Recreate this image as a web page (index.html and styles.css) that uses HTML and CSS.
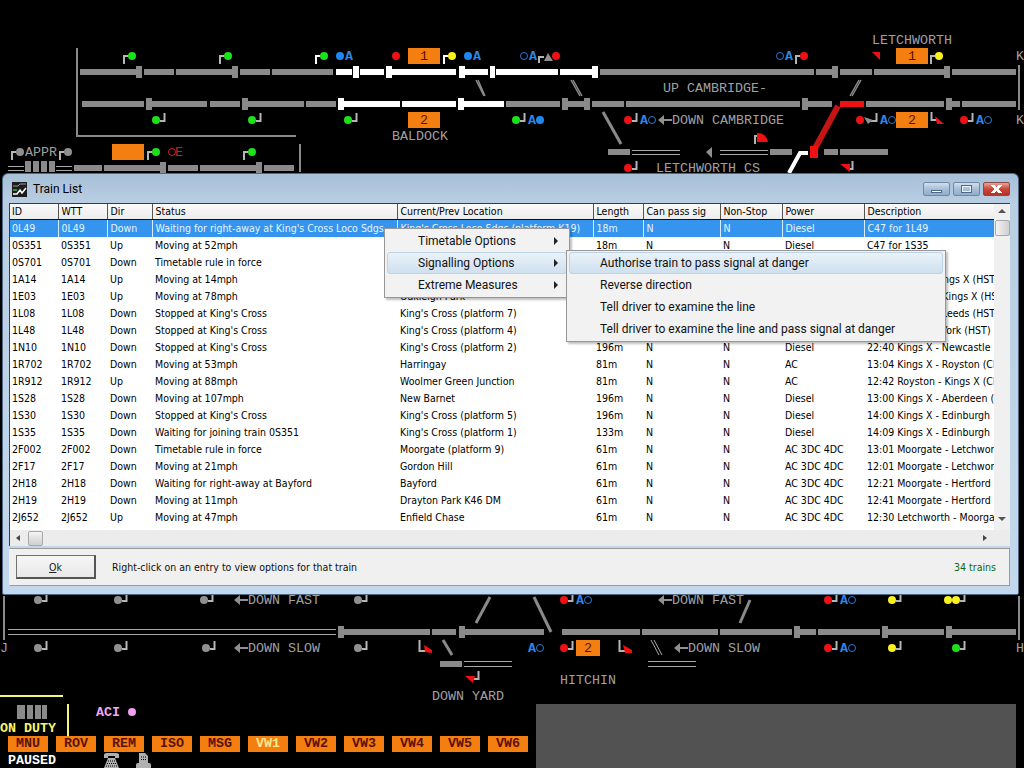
FILE: index.html
```html
<!DOCTYPE html>
<html lang="en">
<head>
<meta charset="utf-8">
<title>Train List</title>
<link rel="stylesheet" href="styles.css">
</head>
<body>
<div class="desk">
<svg class="panel" width="1024" height="768" viewBox="0 0 1024 768" xmlns="http://www.w3.org/2000/svg">
  <defs>
    <path id="up" class="post" d="M-8 8V0H-4"/>
    <path id="upw" class="postw" d="M-8 8V0H-4"/>
    <path id="dn" class="post" d="M4 1H8.5V-7"/>
  </defs>
  <!-- track lines -->
  <g class="trk">
    <path d="M80 72H137M144 72H174M176 72H233M240 72H270M272 72H333"/>
    <path d="M600 72H814M816 72H833M840 72H872M874 72H946M952 72H1016"/>
    <path d="M82 104H144M152 104H207M210 104H240M247 104H304M306 104H336M506 104H560M568 104H585M592 104H624M626 104H800M808 104H832M866 104H944M950 104H960M962 104H1016"/>
    <path d="M608 152H630M770 152H792M824 152H838M840 152H888"/>
    <path d="M74 168H102M104 168H162M168 168H198M200 168H257M264 168H294"/>
    <path d="M344 632H430M432 632H456M464 632H544M562 632H640M642 632H718M720 632H792M800 632H816M818 632H880M886 632H944M950 632H1016"/>
    <path d="M440 664H462"/>
  </g>
  <g class="trkw">
    <path d="M336 72H352M360 72H384M392 72H456M464 72H488M496 72H558M560 72H592"/>
    <path d="M344 104H400M402 104H456M464 104H504"/>
    <path d="M789 173L800 153H808" class="thin"/>
  </g>
  <!-- joint blocks -->
  <g class="blk">
    <rect x="136" y="66" width="6" height="12"/><rect x="232" y="66" width="6" height="12"/>
    <rect x="832" y="66" width="6" height="12"/><rect x="944" y="66" width="6" height="12"/>
    <rect x="146" y="98" width="6" height="12"/><rect x="242" y="98" width="6" height="12"/>
    <rect x="562" y="98" width="6" height="12"/><rect x="584" y="98" width="6" height="12"/>
    <rect x="802" y="98" width="6" height="12"/><rect x="946" y="98" width="6" height="12"/>
    <rect x="160" y="162" width="6" height="12"/><rect x="256" y="162" width="6" height="12"/>
    <rect x="25" y="161" width="6" height="11"/><rect x="33" y="161" width="6" height="11"/>
    <rect x="41" y="161" width="6" height="11"/><rect x="49" y="161" width="6" height="11"/>
    <rect x="338" y="626" width="6" height="12"/><rect x="459" y="626" width="6" height="12"/>
    <rect x="794" y="626" width="6" height="12"/><rect x="882" y="626" width="6" height="12"/>
    <rect x="946" y="626" width="6" height="12"/>
    <rect x="17" y="705" width="8" height="14"/><rect x="27" y="705" width="6" height="14"/>
    <rect x="35" y="705" width="6" height="14"/><rect x="42" y="705" width="5" height="14"/>
  </g>
  <g class="blkw">
    <rect x="353" y="66" width="6" height="12"/><rect x="386" y="66" width="6" height="12"/>
    <rect x="459" y="66" width="6" height="12"/><rect x="490" y="66" width="5" height="12"/>
    <rect x="592" y="66" width="6" height="12"/>
    <rect x="338" y="98" width="6" height="12"/><rect x="458" y="98" width="6" height="12"/>
  </g>
  <!-- frame lines -->
  <g class="frame">
    <path d="M77 48V136H296"/>
    <path d="M300 144V172"/>
    <path d="M1019 65V110"/>
    <path d="M4 596V640"/>
    <path d="M1019 596V640"/>
  </g>
  <!-- thin double lines -->
  <g class="dbl">
    <path d="M632 150.500H680M632 154.500H680M720 150.500H768M720 154.500H768"/>
    <path d="M8 166.500H24M8 170.500H24M56 166.500H72M56 170.500H72"/>
    <path d="M8 629.500H336M8 634.500H336"/>
    <path d="M464 661.500H512M464 666.500H512M648 661.500H696M648 666.500H696"/>
    <path d="M651 640L659 655M654 640L662 655"/>
  </g>
  <!-- crossover slivers and diagonals -->
  <g class="sliver">
    <path d="M476 80L484 96M478 80L485 96"/>
    <path d="M571 80L580 96M573 80L582 96"/>
    <path d="M861 80L852 96M859 80L850 96"/>
  </g>
  <g class="diag">
    <path d="M603 112L621 144"/>
    <path d="M490 597L476 623"/>
    <path d="M534 597L551 632"/>
    <path d="M750 600L740 623"/>
    <path d="M443 640L452 655"/>
  </g>
  <path class="diagred" d="M838 106L813 152"/>
  <path class="trkred" d="M840 104H864"/>
  <rect class="red" x="810" y="146" width="8" height="12"/>
  <!-- platforms -->
  <g class="orange">
    <rect x="408" y="48" width="32" height="16"/><rect x="408" y="112" width="32" height="16"/>
    <rect x="896" y="48" width="32" height="16"/><rect x="896" y="112" width="32" height="16"/>
    <rect x="112" y="144" width="32" height="16"/><rect x="576" y="640" width="24" height="16"/>
  </g>
  <rect class="shade" x="536" y="704" width="480" height="64"/>
  <path class="yline" d="M0 696H63M68 704V736"/>
  <!-- up signal posts -->
  <use href="#up" x="132" y="56"/><use href="#up" x="228" y="56"/><use href="#upw" x="324" y="56"/>
  <use href="#upw" x="452" y="56"/><use href="#up" x="804" y="56"/>
  <use href="#up" x="939" y="56"/><use href="#up" x="20" y="152"/><use href="#up" x="68" y="152"/>
  <use href="#up" x="156" y="152"/><use href="#up" x="252" y="152"/><use href="#up" x="763" y="136"/>
  <!-- down signal posts -->
  <use href="#dn" x="156" y="120"/><use href="#dn" x="252" y="120"/><use href="#dn" x="348" y="120"/>
  <use href="#dn" x="516" y="120"/><use href="#dn" x="628" y="120"/>
  <use href="#dn" x="964" y="120"/><use href="#dn" x="628" y="168"/>
  <use href="#dn" x="844" y="168"/><use href="#dn" x="38" y="600"/><use href="#dn" x="118" y="600"/>
  <use href="#dn" x="204" y="600"/><use href="#dn" x="358" y="600"/><use href="#dn" x="564" y="600"/>
  <use href="#dn" x="828" y="600"/><use href="#dn" x="892" y="600"/><use href="#dn" x="956" y="600"/>
  <use href="#dn" x="38" y="648"/><use href="#dn" x="118" y="648"/><use href="#dn" x="206" y="648"/>
  <use href="#dn" x="358" y="648"/><use href="#dn" x="564" y="648"/><use href="#dn" x="828" y="648"/>
  <use href="#dn" x="892" y="648"/><use href="#dn" x="956" y="648"/><use href="#dn" x="470" y="678"/>
  <path class="post" d="M539 63V57H544M870 121H876.500V113"/>
  <path class="post" d="M931.500 112V120H937M419.500 640V651H426M619.500 640V651H626"/>
  <!-- aspects -->
  <g class="green">
    <circle cx="132" cy="56" r="4"/><circle cx="228" cy="56" r="4"/><circle cx="324" cy="56" r="4"/>
    <circle cx="156" cy="120" r="4"/><circle cx="252" cy="120" r="4"/><circle cx="348" cy="120" r="4"/>
    <circle cx="516" cy="120" r="4"/><circle cx="156" cy="152" r="4"/><circle cx="252" cy="152" r="4"/>
    <circle cx="956" cy="648" r="4"/>
  </g>
  <g class="red">
    <circle cx="396" cy="56" r="4"/><circle cx="556" cy="56" r="4"/><circle cx="804" cy="56" r="4"/>
    <circle cx="628" cy="120" r="4"/><circle cx="860" cy="120" r="4"/><circle cx="964" cy="120" r="4"/>
    <circle cx="628" cy="168" r="4"/><circle cx="564" cy="600" r="4"/><circle cx="828" cy="600" r="4"/>
    <circle cx="564" cy="648" r="4"/><circle cx="828" cy="648" r="4"/>
    <path d="M872 52H880V60Z"/><path d="M757 133V142H768A10 10 0 0 0 757 133Z"/>
    <path d="M840 164H850V172Z"/><path d="M935 116L944 124H937Z"/>
    <path d="M424 645L432 650V653L425 652Z"/><path d="M623 645L632 650V653H625Z"/>
    <path d="M465 676H475L473 683Z"/>
  </g>
  <g class="yellow">
    <circle cx="452" cy="56" r="4"/><circle cx="939" cy="56" r="4"/><circle cx="892" cy="600" r="4"/>
    <circle cx="948" cy="600" r="4"/><circle cx="956" cy="600" r="4"/><circle cx="892" cy="648" r="4"/>
  </g>
  <g class="gsig">
    <circle cx="20" cy="152" r="4"/><circle cx="68" cy="152" r="4"/><circle cx="38" cy="600" r="4"/>
    <circle cx="118" cy="600" r="4"/><circle cx="204" cy="600" r="4"/><circle cx="358" cy="600" r="4"/>
    <circle cx="38" cy="648" r="4"/><circle cx="118" cy="648" r="4"/><circle cx="206" cy="648" r="4"/>
    <circle cx="358" cy="648" r="4"/>
    <path d="M544 61L548 53L553 61Z"/><path d="M864 117L873 120L868 124Z"/>
    <path d="M706 152L712 147V158Z"/>
  </g>
  <g class="blue">
    <circle cx="340" cy="56" r="4"/><circle cx="468" cy="56" r="4"/><circle cx="540" cy="120" r="4"/>
  </g>
  <g class="ring">
    <circle cx="524" cy="56" r="3.500"/><circle cx="780" cy="56" r="3.500"/><circle cx="652" cy="120" r="3.500"/>
    <circle cx="892" cy="120" r="3.500"/><circle cx="988" cy="120" r="3.500"/><circle cx="588" cy="600" r="3.500"/>
    <circle cx="852" cy="600" r="3.500"/><circle cx="540" cy="648" r="3.500"/><circle cx="852" cy="648" r="3.500"/>
  </g>
  <circle class="redring" cx="172" cy="152" r="3.500"/>
  <circle class="pink" cx="132" cy="712" r="4"/>
  <!-- arrows -->
  <g class="arrows">
    <path d="M658 120L664 115V119H672V121H664V125Z"/>
    <path d="M234 600L240 595V599H248V601H240V605Z"/>
    <path d="M658 600L664 595V599H672V601H664V605Z"/>
    <path d="M234 648L240 643V647H248V649H240V653Z"/>
    <path d="M674 648L680 643V647H688V649H680V653Z"/>
  </g>
  <!-- labels -->
  <g transform="translate(0 -1)">
    <g class="lab">
      <text x="872" y="45">LETCHWORTH</text><text x="663" y="93">UP CAMBRIDGE-</text>
      <text x="672" y="125">DOWN CAMBRIDGE</text><text x="392" y="141">BALDOCK</text>
      <text x="656" y="173">LETCHWORTH CS</text><text x="25" y="157">APPR</text>
      <text x="1016" y="61">K</text><text x="1016" y="125">K</text>
      <text x="248" y="605">DOWN FAST</text><text x="672" y="605">DOWN FAST</text>
      <text x="248" y="653">DOWN SLOW</text><text x="688" y="653">DOWN SLOW</text>
      <text x="0" y="653">J</text><text x="1016" y="653">H</text>
      <text x="432" y="701">DOWN YARD</text><text x="560" y="685">HITCHIN</text>
    </g>
    <g class="labblue">
      <text x="345" y="61">A</text><text x="473" y="61">A</text><text x="529" y="61">A</text><text x="785" y="61">A</text>
      <text x="528" y="125">A</text><text x="640" y="125">A</text><text x="880" y="125">A</text><text x="976" y="125">A</text>
      <text x="576" y="605">A</text><text x="840" y="605">A</text><text x="528" y="653">A</text><text x="840" y="653">A</text>
    </g>
    <g class="labdark">
      <text x="420" y="61">1</text><text x="420" y="125">2</text><text x="908" y="61">1</text><text x="908" y="125">2</text>
      <text x="584" y="653">2</text>
    </g>
    <text class="labred" x="175" y="157">E</text>
    <text class="labyellow" x="0" y="733">ON DUTY</text>
    <text class="labpink" x="96" y="717">ACI</text>
    <text class="labwhite" x="8" y="765">PAUSED</text>
  </g>
  <!-- telephone -->
  <g class="icon">
    <path d="M104 755Q104 753 107 753H116Q119 753 119 755V758H115V756H108V758H104Z"/>
    <path d="M108 758H115L119 768H104Z"/>
  </g>
  <path class="icondots" d="M108 761H115M107 763.500H116M106 766H117"/>
  <!-- printer -->
  <g class="icon">
    <path d="M139 753H145L148 756V763H139Z"/>
    <path d="M136 768V765Q136 763 138 763H149Q151 763 151 765V768Z"/>
  </g>
  <path class="icondots" d="M141 757H146M141 759.500H146"/>
</svg>

<div class="cmds">
  <span class="cmd">MNU</span><span class="cmd">ROV</span><span class="cmd">REM</span><span class="cmd">ISO</span>
  <span class="cmd">MSG</span><span class="cmd on">VW1</span><span class="cmd">VW2</span><span class="cmd">VW3</span>
  <span class="cmd">VW4</span><span class="cmd">VW5</span><span class="cmd">VW6</span>
</div>

<section class="win">
  <header class="titlebar">
    <svg class="appicon" width="15" height="15" viewBox="0 0 15 15" xmlns="http://www.w3.org/2000/svg">
      <rect width="15" height="15" fill="#1c1c1c"/>
      <path d="M1 4H6L8 2H14" stroke="#9a9a9a" fill="none"/>
      <path d="M1 12H5L8 8L10 11L14 6" stroke="#fff" stroke-width="1.500" fill="none"/>
      <path d="M1 8H5" stroke="#38b54a" stroke-width="1.500"/>
    </svg>
    <h1 class="wintitle">Train List</h1>
    <div class="caps">
      <span class="cap"><i class="glyph-min"></i></span>
      <span class="cap"><i class="glyph-max"></i></span>
      <span class="cap close"><i class="glyph-x"></i></span>
    </div>
  </header>
  <div class="listbox">
    <div class="listmain">
      <table class="grid">
        <colgroup>
          <col class="c1"><col class="c2"><col class="c3"><col class="c4"><col class="c5"><col class="c6"><col class="c7"><col class="c8"><col class="c9"><col class="c10">
        </colgroup>
        <thead>
          <tr><th>ID</th><th>WTT</th><th>Dir</th><th>Status</th><th>Current/Prev Location</th><th>Length</th><th>Can pass sig</th><th>Non-Stop</th><th>Power</th><th>Description</th></tr>
        </thead>
        <tbody>
          <tr class="sel"><td>0L49</td><td>0L49</td><td>Down</td><td>Waiting for right-away at King's Cross Loco Sdgs</td><td>King's Cross Loco Sdgs (platform K19)</td><td>18m</td><td>N</td><td>N</td><td>Diesel</td><td>C47 for 1L49</td></tr>
          <tr><td>0S351</td><td>0S351</td><td>Up</td><td>Moving at 52mph</td><td></td><td>18m</td><td>N</td><td>N</td><td>Diesel</td><td>C47 for 1S35</td></tr>
          <tr><td>0S701</td><td>0S701</td><td>Down</td><td>Timetable rule in force</td><td></td><td></td><td></td><td></td><td></td><td></td></tr>
          <tr><td>1A14</td><td>1A14</td><td>Up</td><td>Moving at 14mph</td><td></td><td></td><td></td><td></td><td></td><td>12:35 Leeds - Kings X (HST)</td></tr>
          <tr><td>1E03</td><td>1E03</td><td>Up</td><td>Moving at 78mph</td><td>Oakleigh Park</td><td></td><td></td><td></td><td></td><td>12:20 Newark - Kings X (HST)</td></tr>
          <tr><td>1L08</td><td>1L08</td><td>Down</td><td>Stopped at King's Cross</td><td>King's Cross (platform 7)</td><td></td><td></td><td></td><td></td><td>13:05 Kings X - Leeds (HST)</td></tr>
          <tr><td>1L48</td><td>1L48</td><td>Down</td><td>Stopped at King's Cross</td><td>King's Cross (platform 4)</td><td></td><td></td><td></td><td></td><td>13:30 Kings X - York (HST)</td></tr>
          <tr><td>1N10</td><td>1N10</td><td>Down</td><td>Stopped at King's Cross</td><td>King's Cross (platform 2)</td><td>196m</td><td>N</td><td>N</td><td>Diesel</td><td>22:40 Kings X - Newcastle</td></tr>
          <tr><td>1R702</td><td>1R702</td><td>Down</td><td>Moving at 53mph</td><td>Harringay</td><td>81m</td><td>N</td><td>N</td><td>AC</td><td>13:04 Kings X - Royston (Class 365)</td></tr>
          <tr><td>1R912</td><td>1R912</td><td>Up</td><td>Moving at 88mph</td><td>Woolmer Green Junction</td><td>81m</td><td>N</td><td>N</td><td>AC</td><td>12:42 Royston - Kings X (Class 365)</td></tr>
          <tr><td>1S28</td><td>1S28</td><td>Down</td><td>Moving at 107mph</td><td>New Barnet</td><td>196m</td><td>N</td><td>N</td><td>Diesel</td><td>13:00 Kings X - Aberdeen (HST)</td></tr>
          <tr><td>1S30</td><td>1S30</td><td>Down</td><td>Stopped at King's Cross</td><td>King's Cross (platform 5)</td><td>196m</td><td>N</td><td>N</td><td>Diesel</td><td>14:00 Kings X - Edinburgh</td></tr>
          <tr><td>1S35</td><td>1S35</td><td>Down</td><td>Waiting for joining train 0S351</td><td>King's Cross (platform 1)</td><td>133m</td><td>N</td><td>N</td><td>Diesel</td><td>14:09 Kings X - Edinburgh</td></tr>
          <tr><td>2F002</td><td>2F002</td><td>Down</td><td>Timetable rule in force</td><td>Moorgate (platform 9)</td><td>61m</td><td>N</td><td>N</td><td>AC 3DC 4DC</td><td>13:01 Moorgate - Letchworth</td></tr>
          <tr><td>2F17</td><td>2F17</td><td>Down</td><td>Moving at 21mph</td><td>Gordon Hill</td><td>61m</td><td>N</td><td>N</td><td>AC 3DC 4DC</td><td>12:01 Moorgate - Letchworth</td></tr>
          <tr><td>2H18</td><td>2H18</td><td>Down</td><td>Waiting for right-away at Bayford</td><td>Bayford</td><td>61m</td><td>N</td><td>N</td><td>AC 3DC 4DC</td><td>12:21 Moorgate - Hertford</td></tr>
          <tr><td>2H19</td><td>2H19</td><td>Down</td><td>Moving at 11mph</td><td>Drayton Park K46 DM</td><td>61m</td><td>N</td><td>N</td><td>AC 3DC 4DC</td><td>12:41 Moorgate - Hertford</td></tr>
          <tr><td>2J652</td><td>2J652</td><td>Up</td><td>Moving at 47mph</td><td>Enfield Chase</td><td>61m</td><td>N</td><td>N</td><td>AC 3DC 4DC</td><td>12:30 Letchworth - Moorgate</td></tr>
        </tbody>
      </table>
      <div class="hscroll">
        <span class="arrow-l"></span>
        <span class="thumb-h"></span>
        <span class="arrow-r"></span>
      </div>
    </div>
    <div class="vscroll">
      <span class="arrow-u"></span>
      <span class="thumb-v"></span>
      <span class="arrow-d"></span>
      <span class="corner"></span>
    </div>
  </div>
  <footer class="bottom">
    <button class="ok"><u>O</u>k</button>
    <span class="hint">Right-click on an entry to view options for that train</span>
    <span class="count">34 trains</span>
  </footer>

  <ul class="menu m1">
    <li class="arrow">Timetable Options</li>
    <li class="arrow hot">Signalling Options</li>
    <li class="arrow">Extreme Measures</li>
  </ul>
  <ul class="menu m2">
    <li class="hot">Authorise train to pass signal at danger</li>
    <li>Reverse direction</li>
    <li>Tell driver to examine the line</li>
    <li>Tell driver to examine the line and pass signal at danger</li>
  </ul>
</section>
</div>
</body>
</html>
```

FILE: styles.css
```css
* { box-sizing: border-box; }
html, body { margin: 0; padding: 0; background: #000; }
.desk { position: relative; width: 1024px; height: 768px; overflow: hidden; background: #000; }
.panel { position: absolute; left: 0; top: 0; display: block; }

/* signalling panel */
.trk path { stroke: #8a8a8a; stroke-width: 6; fill: none; }
.trkw path { stroke: #fff; stroke-width: 6; fill: none; }
.trkw .thin { stroke-width: 4; }
.trkred { stroke: #ee1111; stroke-width: 6; fill: none; }
.diagred { stroke: #c41414; stroke-width: 6; fill: none; }
.blk rect { fill: #8a8a8a; }
.blkw rect { fill: #fff; }
.frame path { stroke: #8a8a8a; stroke-width: 2; fill: none; }
.dbl path { stroke: #a8a8a8; stroke-width: 1; fill: none; }
.diag path { stroke: #8a8a8a; stroke-width: 3; fill: none; }
.sliver path { stroke: #8a8a8a; stroke-width: 1.500; fill: none; }
.orange rect { fill: #f57e10; }
.shade { fill: #525252; }
.yline { stroke: #f5f56e; stroke-width: 2; fill: none; }
.post { stroke: #b4b4b4; stroke-width: 2; fill: none; }
.postw { stroke: #fff; stroke-width: 2; fill: none; }
.green circle { fill: #1ee01e; }
.red, .red circle, .red path { fill: #ee1111; }
.yellow circle { fill: #f8f020; }
.gsig circle, .gsig path, .gsig rect, .arrows path { fill: #909090; }
.blue circle { fill: #1e88f0; }
.ring circle { fill: none; stroke: #2a78d8; stroke-width: 1; }
.redring { fill: none; stroke: #d02020; stroke-width: 1; }
.pink { fill: #f0a0f0; }
.icon path { fill: #b0b0b0; }
.icondots { stroke: #000; stroke-width: 1; stroke-dasharray: 1 1; fill: none; }
.lab text, .labblue text, .labdark text, .labred, .labyellow, .labpink, .labwhite {
  font-family: "Liberation Mono", monospace;
  font-size: 13.33px;
}
.lab text { fill: #a0a0a0; }
.labblue text { fill: #2a88ee; font-weight: 700; }
.labdark text { fill: #5a1206; }
.labred { fill: #d02020; }
.labyellow { fill: #f5f56e; font-weight: 700; }
.labpink { fill: #f0a8f0; font-weight: 700; }
.labwhite { fill: #fff; font-weight: 700; }

/* command strip */
.cmds { position: absolute; left: 8px; top: 736px; display: flex; gap: 8px; }
.cmd {
  width: 40px; height: 16px; background: #f57e10; color: #5a1206;
  font: 700 13.33px/16px "Liberation Mono", monospace; text-align: center;
}
.cmd.on { color: #f8e890; }

/* window */
.win {
  position: absolute; left: 2px; top: 173px; width: 1017px; height: 422px;
  display: flex; flex-direction: column;
  padding: 0 8px 9px 6px;
  border-radius: 6px 6px 2px 2px;
  border: 1px solid #4e6a85;
  background: linear-gradient(180deg, #a8c0d8 0, #b9cee2 30px, #c3d8ec 100%);
  font-family: "DejaVu Sans Condensed", "DejaVu Sans", sans-serif;
  font-stretch: condensed;
  font-size: 10.500px;
  color: #000;
}
.titlebar { height: 29px; display: flex; align-items: center; flex: none; padding: 1px 0 0 3px; }
.appicon { display: block; margin-right: 6px; }
.wintitle { margin: 0; font: 400 12px Roboto, sans-serif; color: #000; }
.caps { margin-left: auto; display: flex; gap: 3px; margin-top: -1px; }
.cap {
  width: 27px; height: 14px; border: 1px solid #6d89a5; border-radius: 2px;
  background: linear-gradient(180deg, #d2e0ee 0, #a6bfd8 50%, #8fadcb 100%);
  display: flex; align-items: center; justify-content: center;
}
.cap.close { background: linear-gradient(180deg, #e8a49a 0, #c8483a 50%, #b83424 100%); border-color: #8a4a42; }
.glyph-min { width: 11px; height: 3px; background: #fff; border: 1px solid #4e6a85; display: block; margin-top: 6px; }
.glyph-max { width: 11px; height: 8px; border: 1px solid #4e6a85; outline: 1px solid #e8f0f8; outline-offset: -2px; display: block; }
.glyph-x { width: 11px; height: 8px; display: block; background: linear-gradient(45deg, transparent 42%, #fff 42%, #fff 58%, transparent 58%), linear-gradient(-45deg, transparent 42%, #fff 42%, #fff 58%, transparent 58%); }

.listbox {
  height: 343px; flex: none; display: flex;
  border: 1px solid #3c3c3c; border-width: 1px 0 0 1px;
  background: #fff;
}
.listmain { width: 984px; display: flex; flex-direction: column; overflow: hidden; }
.grid { width: 984px; table-layout: fixed; border-collapse: collapse; flex: none; }
.c1 { width: 48px; } .c2 { width: 49px; } .c3 { width: 45px; } .c4 { width: 245px; } .c5 { width: 196px; }
.c6 { width: 50px; } .c7 { width: 77px; } .c8 { width: 62px; } .c9 { width: 82px; } .c10 { width: 130px; }
.grid th {
  height: 15px; padding: 0 0 0 3px; text-align: left; font-weight: 400; overflow: hidden; white-space: nowrap;
  background: linear-gradient(180deg, #fafafa, #ececec);
  border-right: 1px solid #555; border-bottom: 1px solid #111;
  line-height: 13px;
}
.grid td {
  height: 17px; padding: 0 0 0 3px; overflow: hidden; white-space: nowrap; line-height: 17px;
}
.grid th:first-child, .grid td:first-child { padding-left: 2px; }
.sel td { background: #3594ee; color: #e8f4ff; border-right: 1px solid #d8ecff; }

.hscroll {
  height: 16px; margin-top: auto; flex: none; background: #ececec;
  display: flex; align-items: center;
}
.arrow-l { width: 0; height: 0; margin-left: 6px; border: 3.500px solid transparent; border-left: 0; border-right: 4px solid #444; }
.thumb-h { width: 15px; height: 15px; margin-left: 8px; border: 1px solid #a8a8a8; background: linear-gradient(180deg, #f4f4f4, #cfcfcf); border-radius: 2px; }
.arrow-r { width: 0; height: 0; margin-left: auto; margin-right: 7px; border: 3.500px solid transparent; border-right: 0; border-left: 4px solid #444; }

.vscroll { width: 16px; display: flex; flex-direction: column; align-items: center; background: #f0f0f0; }
.arrow-u { width: 0; height: 0; margin-top: 5px; border: 4px solid transparent; border-top: 0; border-bottom: 4px solid #555; }
.thumb-v { width: 15px; height: 16px; margin-top: 7px; border: 1px solid #a8a8a8; background: linear-gradient(90deg, #f4f4f4, #cfcfcf); border-radius: 2px; }
.arrow-d { width: 0; height: 0; margin-top: auto; margin-bottom: 9px; border: 4px solid transparent; border-bottom: 0; border-top: 4px solid #555; }
.corner { width: 16px; height: 16px; background: #ececec; }

.bottom {
  height: 38px; margin-top: 2px; flex: none; display: flex; align-items: center;
  background: #f0f0f0; border: 1px solid #9a9a9a; border-left-color: #f0f0f0;
  padding: 0 13px 0 6px;
}
.ok {
  width: 80px; height: 24px; padding: 0; margin: 0 16px 0 0;
  border: 1px solid #707070; border-right: 2px solid #555; border-bottom: 2px solid #555;
  background: linear-gradient(180deg, #f6f6f6, #e8e8e8);
  font: inherit; font-stretch: condensed; color: #222;
}
.hint { color: #111; }
.count { margin-left: auto; color: #0c6a10; }

/* popup menus */
.menu {
  position: absolute; margin: 0; padding: 1px 2px; list-style: none;
  background: #f2f2f2; border: 1px solid #979797;
  font: 400 12px Roboto, sans-serif; color: #111;
  box-shadow: 2px 2px 2px rgba(0,0,0,.25);
}
.menu li { height: 22px; line-height: 20px; padding-left: 30px; position: relative; border: 1px solid transparent; }
.menu li.hot { background: linear-gradient(180deg, #eaf2f9, #cfe0ef); border-color: #bcd2e6; border-radius: 3px; }
.menu li.arrow::after {
  content: ""; position: absolute; right: 8px; top: 6px; width: 0; height: 0;
  border: 4px solid transparent; border-right: 0; border-left: 4px solid #222;
}
.m1 { left: 381px; top: 54px; width: 186px; }
.m2 { left: 563px; top: 76px; width: 380px; }
```
